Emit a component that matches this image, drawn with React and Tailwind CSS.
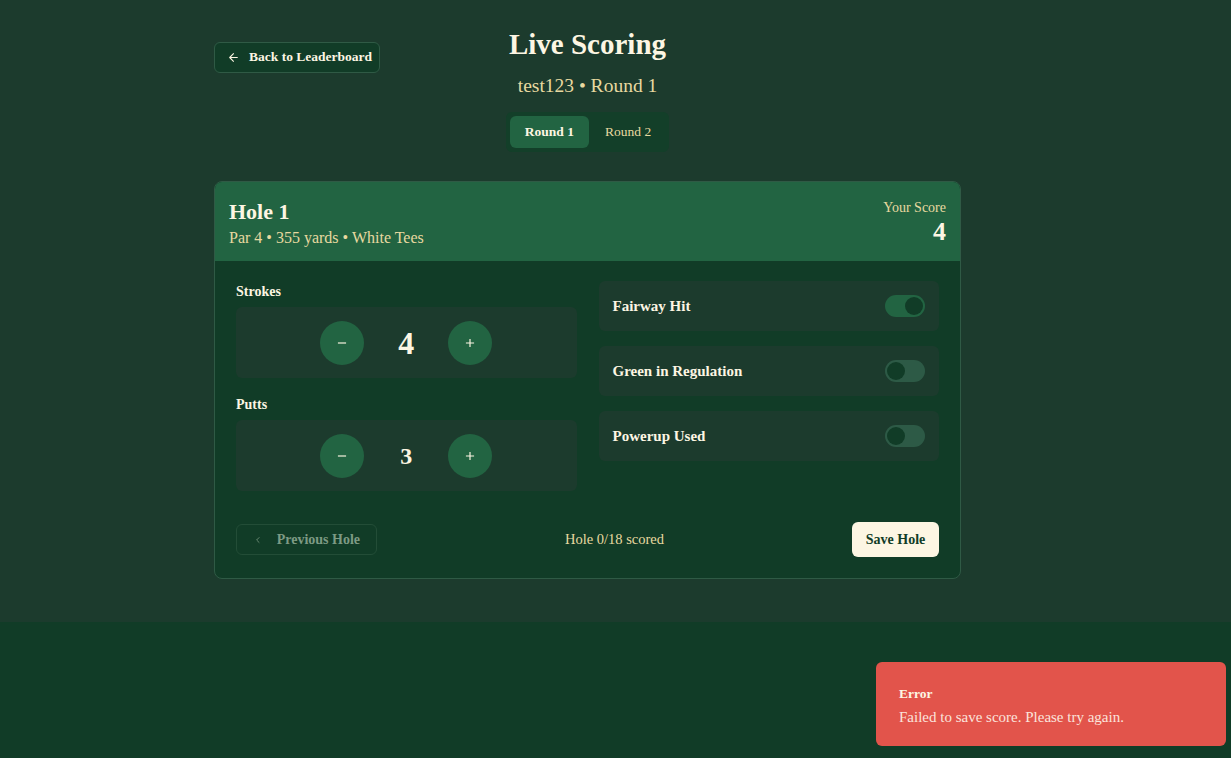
import React from "react";

const serif = { fontFamily: '"Liberation Serif", "DejaVu Serif", serif' };

function Stepper({ label, value, big }) {
  return (
    <div>
      <div className="text-[14px] font-semibold text-[#fdf6e3] mb-[5px]">{label}</div>
      <div className="h-[71px] rounded-md bg-[#1c3b2d] flex items-center justify-center gap-[21px]">
        <button className="w-[44px] h-[44px] rounded-full bg-[#226442] flex items-center justify-center text-[#fdf6e3]">
          <svg width="14" height="14" viewBox="0 0 24 24" fill="none" stroke="currentColor" strokeWidth="2"><path d="M5 12h14" /></svg>
        </button>
        <div className={`w-[42px] text-center font-bold text-[#fdf6e3] ${big ? "text-[32px]" : "text-[24px]"}`}>{value}</div>
        <button className="w-[44px] h-[44px] rounded-full bg-[#226442] flex items-center justify-center text-[#fdf6e3]">
          <svg width="14" height="14" viewBox="0 0 24 24" fill="none" stroke="currentColor" strokeWidth="2"><path d="M5 12h14M12 5v14" /></svg>
        </button>
      </div>
    </div>
  );
}

function ToggleRow({ label, on }) {
  return (
    <div className="h-[50px] rounded-md bg-[#1c3b2d] flex items-center justify-between px-[14px]">
      <span className="text-[15px] font-semibold text-[#fdf6e3]">{label}</span>
      <div className={`w-[40px] h-[22px] rounded-full p-[2px] flex items-center ${on ? "bg-[#226442] justify-end" : "bg-[#2d5a46] justify-start"}`}>
        <div className="w-[18px] h-[18px] rounded-full bg-[#113c27]" />
      </div>
    </div>
  );
}

export default function App() {
  return (
    <div className="min-h-[758px] bg-[#113c27] relative" style={serif}>
      <div className="h-[622px] bg-[#1c3b2d] pt-[28px]">
        <div className="ml-[214px] w-[747px]">
          <div className="relative flex flex-col items-center">
            <button className="absolute left-0 top-[14px] h-[31px] w-[166px] whitespace-nowrap rounded-md border border-[#2f5a45] bg-[#113c27] flex items-center gap-[9px] pl-[12px] text-[13.5px] font-semibold text-[#fdf6e3]">
              <svg width="13" height="13" viewBox="0 0 24 24" fill="none" stroke="currentColor" strokeWidth="2" strokeLinecap="round" strokeLinejoin="round"><path d="M19 12H5M12 19l-7-7 7-7" /></svg>
              Back to Leaderboard
            </button>
            <h1 className="text-[29px] leading-[32px] font-bold text-[#fdf6e3]">Live Scoring</h1>
            <div className="mt-[14px] text-[19.5px] leading-[24px] text-[#e8d9a0]">test123 • Round 1</div>
            <div className="mt-[14px] p-[4px] rounded-md bg-[#133f29] flex gap-[2px]">
              <div className="px-[15px] h-[32px] flex items-center rounded-md bg-[#226442] text-[13.5px] font-semibold text-[#fdf6e3]">Round 1</div>
              <div className="px-[14px] h-[32px] flex items-center rounded-md text-[13.5px] text-[#e8d9a0]">Round 2</div>
            </div>
          </div>

          <div className="mt-[29px] rounded-lg border border-[#2f5a45] overflow-hidden bg-[#113c27]">
            <div className="h-[79px] bg-[#226442] flex items-start justify-between px-[14px] pt-[17px]">
              <div>
                <div className="text-[22px] leading-[26px] font-bold text-[#fdf6e3]">Hole 1</div>
                <div className="text-[16px] text-[#e8d9a0] mt-[1px]">Par 4 • 355 yards • White Tees</div>
              </div>
              <div className="text-right">
                <div className="text-[14px] text-[#e8d9a0] -mt-[2px]">Your Score</div>
                <div className="text-[26px] leading-[28px] font-bold text-[#fdf6e3]">4</div>
              </div>
            </div>
            <div className="px-[21px] pt-[20px] pb-[21px]">
              <div className="grid grid-cols-2 gap-[22px]">
                <div className="flex flex-col gap-[16px]">
                  <Stepper label="Strokes" value="4" big />
                  <Stepper label="Putts" value="3" />
                </div>
                <div className="flex flex-col gap-[15px]">
                  <ToggleRow label="Fairway Hit" on />
                  <ToggleRow label="Green in Regulation" />
                  <ToggleRow label="Powerup Used" />
                </div>
              </div>
              <div className="mt-[31px] flex items-center justify-between">
                <button className="h-[31px] w-[141px] whitespace-nowrap rounded-md border border-[#234d37] flex items-center gap-[14px] px-[16px] text-[14px] font-semibold text-[#7d9a84]">
                  <svg width="12" height="12" viewBox="0 0 24 24" fill="none" stroke="currentColor" strokeWidth="2" strokeLinecap="round" strokeLinejoin="round"><path d="M15 18l-6-6 6-6" /></svg>
                  Previous Hole
                </button>
                <div className="text-[14.5px] text-[#e8d9a0]">Hole 0/18 scored</div>
                <button className="h-[35px] w-[87px] rounded-md bg-[#fdf6e3] text-[14px] font-semibold text-[#113c27]">Save Hole</button>
              </div>
            </div>
          </div>
        </div>
      </div>

      <div className="absolute left-[876px] top-[662px] w-[350px] h-[84px] rounded-md bg-[#e2544b] px-[23px] pt-[22px]">
        <div className="text-[13.5px] font-semibold text-[#fdf6e3]">Error</div>
        <div className="text-[15px] text-[#fbe3dc] mt-[2px]">Failed to save score. Please try again.</div>
      </div>
    </div>
  );
}
